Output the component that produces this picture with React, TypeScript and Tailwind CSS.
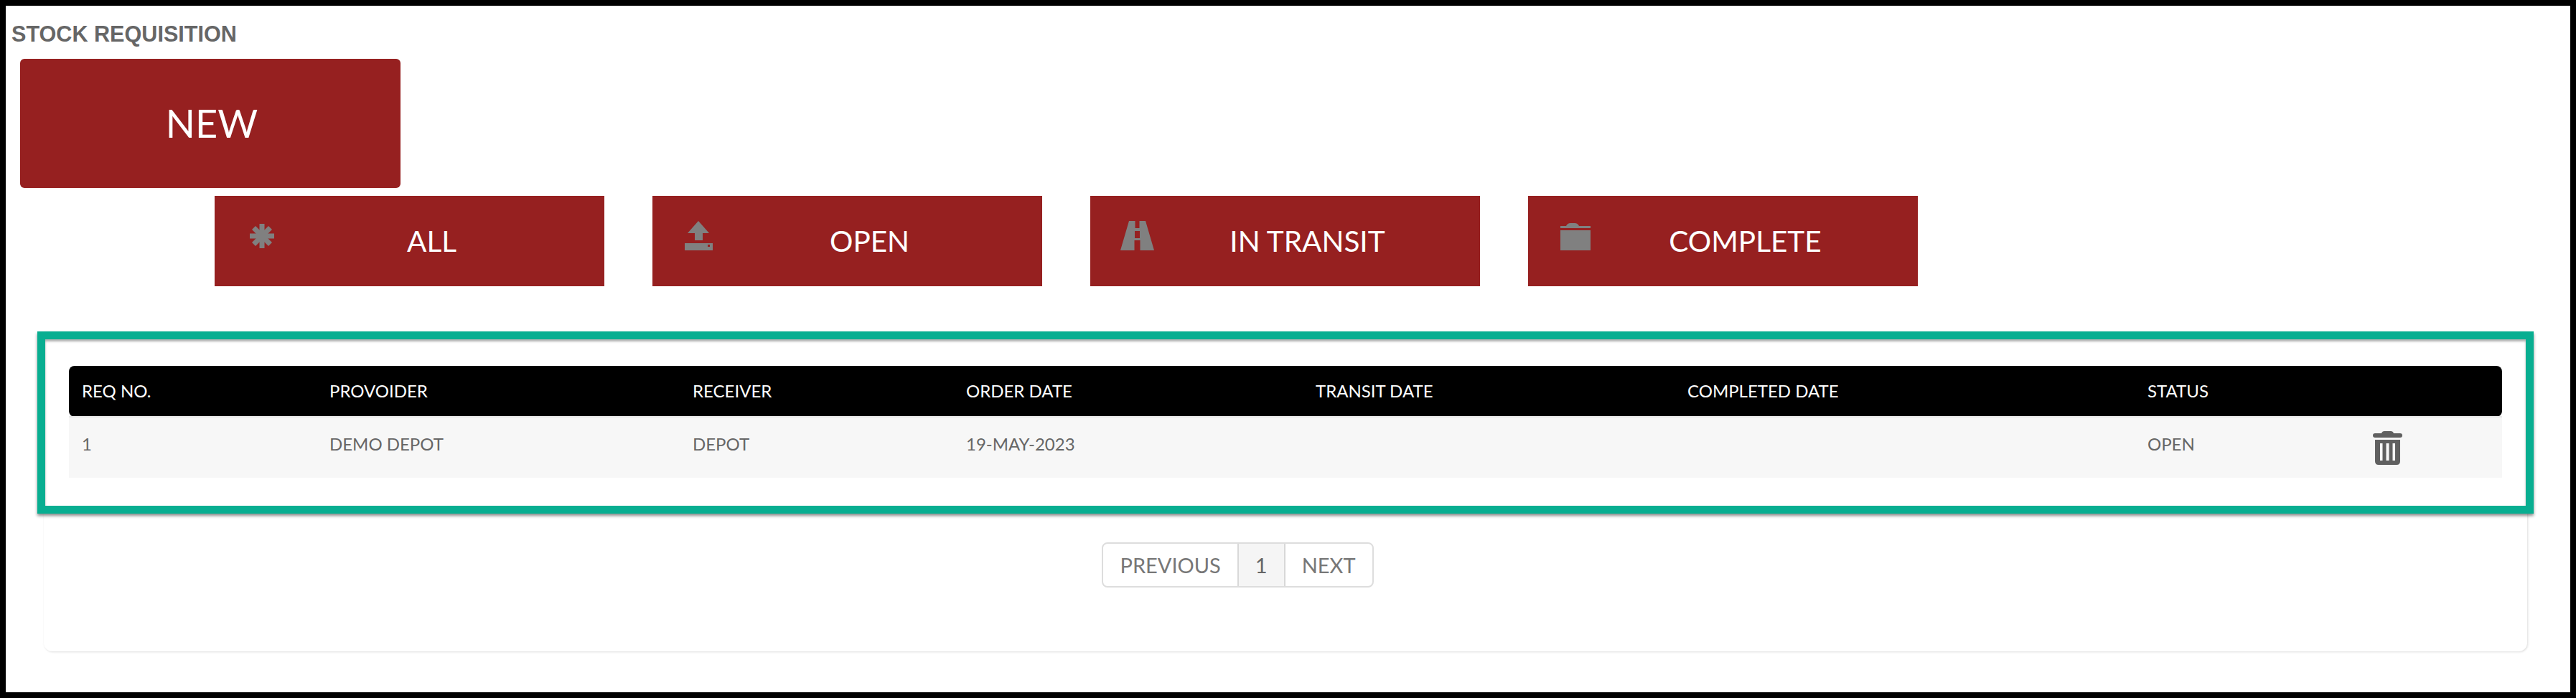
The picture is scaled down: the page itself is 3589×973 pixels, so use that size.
import type { ReactNode } from "react";

// Grey glyphs on the tab buttons
function AsteriskIcon() {
  return (
    <svg viewBox="0 0 34 34" className="w-[34px] h-[34px]" stroke="#808080" strokeWidth="7">
      <line x1="17" y1="0" x2="17" y2="34" />
      <line x1="0" y1="17" x2="34" y2="17" />
      <line x1="5.5" y1="5.5" x2="28.5" y2="28.5" />
      <line x1="28.5" y1="5.5" x2="5.5" y2="28.5" />
    </svg>
  );
}

function UploadIcon() {
  return (
    <svg viewBox="0 0 39 41" className="w-[39px] h-[41px]" fill="#808080">
      <path d="M19 0 L34 17 H25 V27 H14 V17 H4 Z" />
      <path fillRule="evenodd" d="M0 31 H39 V41 H0 Z M32 33 V36 H35 V33 Z" />
    </svg>
  );
}

function RoadIcon() {
  return (
    <svg viewBox="0 0 47 41" className="w-[47px] h-[41px]" fill="#808080">
      <path
        fillRule="evenodd"
        d="M12 0 H35 L47 41 H0 Z M20.5 0 V10 H26.5 V0 Z M20 14 V24 H27 V14 Z M19.5 27 V41 H27.5 V27 Z"
      />
    </svg>
  );
}

function FolderIcon() {
  return (
    <svg viewBox="0 0 42 38" className="w-[42px] h-[38px]" fill="#808080">
      <path d="M8 4 Q10 0 14 0 H20 Q24 0 26 4 Z" />
      <path d="M0 4 H42 V7 H0 Z" />
      <path d="M0 10 H42 V38 H0 Z" />
    </svg>
  );
}

function TrashIcon() {
  return (
    <svg viewBox="0 0 41 47" className="w-[41px] h-[47px]" fill="#606060">
      <path d="M12 3 Q13 0 16 0 H25 Q28 0 29 3 H38 Q41 3 41 6 Q41 9 38 9 H3 Q0 9 0 6 Q0 3 3 3 Z" />
      <path
        fillRule="evenodd"
        d="M3 12 H38 V42 Q38 47 33 47 H8 Q3 47 3 42 Z M10 17 V41 H13.5 V17 Z M18.5 17 V41 H22.5 V17 Z M27.5 17 V41 H31 V17 Z"
      />
    </svg>
  );
}

interface TabButtonProps {
  label: string;
  icon: ReactNode;
  iconClass: string;
}

function TabButton({ label, icon, iconClass }: TabButtonProps) {
  return (
    <button className="flex items-start w-[543px] h-[126px] bg-[#962020] text-white">
      <span className={`flex shrink-0 w-[70px] ${iconClass}`}>{icon}</span>
      <span className="flex-1 self-center pr-[38px] text-center text-[40.5px] leading-none">
        {label}
      </span>
    </button>
  );
}

const tabs = [
  { label: "ALL", icon: <AsteriskIcon />, iconClass: "ml-[49px] mt-[39px] -mr-[19px]" },
  { label: "OPEN", icon: <UploadIcon />, iconClass: "ml-[45px] mt-[35px] -mr-[15px]" },
  { label: "IN TRANSIT", icon: <RoadIcon />, iconClass: "ml-[42px] mt-[35px] -mr-[12px]" },
  { label: "COMPLETE", icon: <FolderIcon />, iconClass: "ml-[45px] mt-[38px] -mr-[15px]" },
];

const columns = [
  { title: "REQ NO.", value: "1", width: "w-[345px]" },
  { title: "PROVOIDER", value: "DEMO DEPOT", width: "w-[506px]" },
  { title: "RECEIVER", value: "DEPOT", width: "w-[381px]" },
  { title: "ORDER DATE", value: "19-MAY-2023", width: "w-[487px]" },
  { title: "TRANSIT DATE", value: "", width: "w-[518px]" },
  { title: "COMPLETED DATE", value: "", width: "w-[641px]" },
  { title: "STATUS", value: "OPEN", width: "w-[296px]" },
];

export default function App() {
  return (
    <div className="h-[973px] border-8 border-black bg-white font-['Lato',sans-serif] overflow-hidden">
      {/* Header */}
      <h1 className="pl-2 pt-[24px] h-[74px] font-['Liberation_Sans',sans-serif] font-bold text-[30.6px] leading-[30px] text-[#666666]">
        STOCK REQUISITION
      </h1>

      <button className="block ml-5 pl-1 w-[530px] h-[180px] rounded-md bg-[#962020] text-white text-[54px] leading-none">
        NEW
      </button>

      {/* Status tabs */}
      <div className="flex gap-[67px] ml-[291px] mt-[11px]">
        {tabs.map((tab) => (
          <TabButton key={tab.label} {...tab} />
        ))}
      </div>

      {/* Card with table and pagination */}
      <div className="ml-[53px] mr-[60px] mt-[63px] h-[446px] rounded-b-xl shadow-[1px_1px_3px_rgba(0,0,0,0.14)]">
        <div className="-mx-[9px] border-[11px] border-[#08ae91] pt-[37px] pb-[39px] px-[33px] bg-white shadow-[0_3px_4px_rgba(0,0,0,0.45),inset_0_3px_3px_rgba(0,0,0,0.3)]">
          <table className="w-full table-fixed border-collapse text-left text-[24px]">
            <thead>
              <tr className="h-[71px] text-white">
                {columns.map((col, i) => (
                  <th
                    key={col.title}
                    className={`${col.width} pl-[18px] font-normal bg-black ${i === 0 ? "rounded-l-lg" : ""}`}
                  >
                    {col.title}
                  </th>
                ))}
                <th className="bg-black rounded-r-lg" />
              </tr>
            </thead>
            <tbody>
              <tr className="h-[85px] text-[#666666] border-t-2 border-[#e8e8e8]">
                {columns.map((col) => (
                  <td key={col.title} className="pl-[18px] pb-[11px] bg-[#f7f7f7]">
                    {col.value}
                  </td>
                ))}
                <td className="pl-[36px] bg-[#f7f7f7]">
                  <TrashIcon />
                </td>
              </tr>
            </tbody>
          </table>
        </div>

        {/* Pagination */}
        <div className="flex justify-center pr-[133px] mt-[40px]">
          <div className="flex h-[63px] items-center rounded-lg border-2 border-[#dddddd] text-[29px] leading-none text-[#777777]">
            <span className="flex items-center h-full px-[23px]">PREVIOUS</span>
            <span className="flex items-center h-full px-[23px] border-x-2 border-[#d8d8d8] bg-[#f5f5f5] text-[#666666]">
              1
            </span>
            <span className="flex items-center h-full px-[23px]">NEXT</span>
          </div>
        </div>
      </div>
    </div>
  );
}
